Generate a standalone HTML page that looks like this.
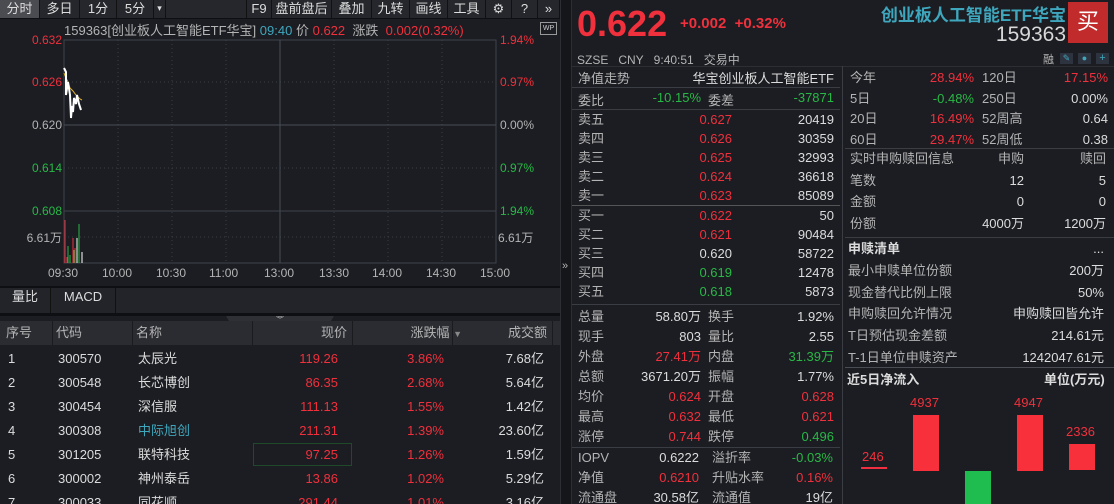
<!DOCTYPE html><html><head><meta charset="utf-8"><style>
*{margin:0;padding:0;box-sizing:border-box}
html{width:1114px;height:504px;overflow:hidden}
body{width:1114px;height:504px;background:#1b1d22;font-family:"Liberation Sans","Noto Sans CJK SC",sans-serif;color:#d0d0d0;font-size:13px;position:relative;overflow:hidden}
.a{position:absolute;white-space:nowrap}
.r{color:#f0303c}.g{color:#28b846}.w{color:#dcdcdc}.l{color:#b4b4b4}.t{color:#3fa7bd}
.ra{text-align:right}
.hl{position:absolute;height:1px;background:#3a3d44}
.vl{position:absolute;width:1px;background:#3a3d44}
.tb span{position:absolute;top:0;height:18px;line-height:17px;font-size:13px;color:#ddd;text-align:center;border-right:1px solid #111}
</style></head><body>
<div class="a tb" style="left:0;top:0;width:560px;height:18px;background:#25272c">
<span style="left:0;width:40px;background:#4a4c52">分时</span><span style="left:40px;width:40px">多日</span><span style="left:80px;width:37px">1分</span><span style="left:117px;width:37px">5分</span><span style="left:154px;width:12px;font-size:9px">▾</span>
<span style="left:246px;width:26px;border-left:1px solid #111">F9</span><span style="left:272px;width:60px">盘前盘后</span><span style="left:332px;width:40px">叠加</span><span style="left:372px;width:38px">九转</span><span style="left:410px;width:38px">画线</span><span style="left:448px;width:38px">工具</span><span style="left:486px;width:26px">⚙</span><span style="left:512px;width:26px">?</span><span style="left:538px;width:22px">»</span>
</div>
<div class="hl" style="left:0;top:18px;width:560px;background:#0e0f12"></div>
<div class="a" style="left:64px;top:20px;font-size:13px"><span class="l">159363[创业板人工智能ETF华宝]</span> <span class="t">09:40</span> <span class="l">价</span> <span class="r">0.622</span> <span class="l">&nbsp;涨跌</span> <span class="r">&nbsp;0.002(0.32%)</span></div>
<div class="a" style="left:540px;top:22px;width:17px;height:13px;border:1px solid #999;font-size:7px;color:#ccc;text-align:center;line-height:11px">WP</div>
<svg class="a" style="left:0;top:0" width="560" height="290">
<g stroke="#3a3d44" stroke-dasharray="1,3" stroke-width="1">
<line x1="64" y1="82" x2="496" y2="82"/><line x1="64" y1="168" x2="496" y2="168"/><line x1="64" y1="211" x2="496" y2="211"/><line x1="64" y1="237" x2="496" y2="237"/>
<line x1="118" y1="40" x2="118" y2="263"/><line x1="172" y1="40" x2="172" y2="263"/><line x1="226" y1="40" x2="226" y2="263"/><line x1="334" y1="40" x2="334" y2="263"/><line x1="388" y1="40" x2="388" y2="263"/><line x1="442" y1="40" x2="442" y2="263"/>
</g>
<rect x="64" y="40" width="432" height="223" fill="none" stroke="#3f4249"/>
<line x1="64" y1="125" x2="496" y2="125" stroke="#4a4d54"/><line x1="280" y1="40" x2="280" y2="263" stroke="#4a4d54"/>
<line x1="64" y1="211" x2="496" y2="211" stroke="#3f4249"/>
<polyline points="64,73 66,78 68,82 70,88 73,91 76,95 80,99 82,100" fill="none" stroke="#e3b12a" stroke-width="1"/>
<polyline points="64,68 66,72 66,95 68,82 70,95 71,118 72,106 73,112 74,98 76,104 77,95 79,104 81,110" fill="none" stroke="#fff" stroke-width="2"/>
<g stroke-width="1"><line x1="65" y1="220" x2="65" y2="263" stroke="#f03040"/><line x1="67" y1="257" x2="67" y2="263" stroke="#f03040"/><line x1="68" y1="246" x2="68" y2="263" stroke="#28b846"/><line x1="70" y1="255" x2="70" y2="263" stroke="#28b846"/><line x1="73" y1="238" x2="73" y2="263" stroke="#f03040"/><line x1="74" y1="250" x2="74" y2="263" stroke="#28b846"/><line x1="75" y1="248" x2="75" y2="263" stroke="#f03040"/><line x1="77" y1="238" x2="77" y2="263" stroke="#fff"/><line x1="79" y1="224" x2="79" y2="263" stroke="#28b846"/><line x1="82" y1="252" x2="82" y2="263" stroke="#fff"/></g>
</svg>
<div class="a r ra" style="left:20px;top:33px;width:42px;font-size:12px">0.632</div>
<div class="a r ra" style="left:20px;top:75px;width:42px;font-size:12px">0.626</div>
<div class="a l ra" style="left:20px;top:118px;width:42px;font-size:12px">0.620</div>
<div class="a g ra" style="left:20px;top:161px;width:42px;font-size:12px">0.614</div>
<div class="a g ra" style="left:20px;top:204px;width:42px;font-size:12px">0.608</div>
<div class="a l ra" style="left:10px;top:229px;width:52px;font-size:12px">6.61万</div>
<div class="a r" style="left:500px;top:33px;font-size:12px">1.94%</div>
<div class="a r" style="left:500px;top:75px;font-size:12px">0.97%</div>
<div class="a l" style="left:500px;top:118px;font-size:12px">0.00%</div>
<div class="a g" style="left:500px;top:161px;font-size:12px">0.97%</div>
<div class="a g" style="left:500px;top:204px;font-size:12px">1.94%</div>
<div class="a l" style="left:498px;top:229px;font-size:12px">6.61万</div>
<div class="a l" style="left:0;top:266px;width:560px;font-size:12px">
<span class="a" style="left:48px">09:30</span><span class="a" style="left:102px">10:00</span><span class="a" style="left:156px">10:30</span><span class="a" style="left:209px">11:00</span><span class="a" style="left:264px">13:00</span><span class="a" style="left:319px">13:30</span><span class="a" style="left:372px">14:00</span><span class="a" style="left:426px">14:30</span><span class="a" style="left:480px">15:00</span></div>
<div class="hl" style="left:0;top:286px;width:560px;background:#0e0f12;height:2px"></div>
<div class="a" style="left:0;top:288px;width:560px;height:26px;background:#22242a"></div>
<div class="a w" style="left:0;top:288px;width:51px;height:25px;line-height:18px;text-align:center;border-right:1px solid #111">量比</div>
<div class="a w" style="left:51px;top:288px;width:65px;height:25px;line-height:18px;text-align:center;border-right:1px solid #111">MACD</div>
<div class="hl" style="left:0;top:313px;width:560px;background:#0e0f12;height:3px"></div>
<div class="a" style="left:226px;top:316px;width:108px;height:9px;background:#2e3036;clip-path:polygon(0 0,100% 0,95% 100%,5% 100%);font-size:8px;text-align:center;line-height:8px;color:#ccc">︾</div>
<div class="a" style="left:0;top:321px;width:560px;height:24px;background:#2a2c31"></div>
<div class="a l" style="left:0;top:321px;width:560px;height:24px;line-height:24px">
<span class="a" style="left:6px">序号</span><span class="a" style="left:56px">代码</span><span class="a" style="left:136px">名称</span><span class="a ra" style="left:252px;width:95px">现价</span><span class="a ra" style="left:352px;width:110px">涨跌幅 <span style="font-size:9px;color:#888">▼</span></span><span class="a ra" style="left:452px;width:95px">成交额</span></div>
<div class="vl" style="left:52px;top:321px;height:24px;background:#1a1b1f"></div><div class="vl" style="left:132px;top:321px;height:24px;background:#1a1b1f"></div><div class="vl" style="left:252px;top:321px;height:24px;background:#1a1b1f"></div><div class="vl" style="left:352px;top:321px;height:24px;background:#1a1b1f"></div><div class="vl" style="left:452px;top:321px;height:24px;background:#1a1b1f"></div><div class="vl" style="left:552px;top:321px;height:24px;background:#1a1b1f"></div>
<div class="a" style="left:253px;top:443px;width:99px;height:23px;border:1px solid #1f4a2a"></div>
<div class="a w" style="left:0;top:347px;width:560px;font-size:13px;line-height:24px">
<div style="position:relative;height:24px"><span class="a" style="left:8px">1</span><span class="a" style="left:58px">300570</span><span class="a" style="left:138px">太辰光</span><span class="a r ra" style="left:252px;width:86px">119.26</span><span class="a r ra" style="left:352px;width:92px">3.86%</span><span class="a ra" style="left:452px;width:92px">7.68亿</span></div>
<div style="position:relative;height:24px"><span class="a" style="left:8px">2</span><span class="a" style="left:58px">300548</span><span class="a" style="left:138px">长芯博创</span><span class="a r ra" style="left:252px;width:86px">86.35</span><span class="a r ra" style="left:352px;width:92px">2.68%</span><span class="a ra" style="left:452px;width:92px">5.64亿</span></div>
<div style="position:relative;height:24px"><span class="a" style="left:8px">3</span><span class="a" style="left:58px">300454</span><span class="a" style="left:138px">深信服</span><span class="a r ra" style="left:252px;width:86px">111.13</span><span class="a r ra" style="left:352px;width:92px">1.55%</span><span class="a ra" style="left:452px;width:92px">1.42亿</span></div>
<div style="position:relative;height:24px"><span class="a" style="left:8px">4</span><span class="a" style="left:58px">300308</span><span class="a t" style="left:138px">中际旭创</span><span class="a r ra" style="left:252px;width:86px">211.31</span><span class="a r ra" style="left:352px;width:92px">1.39%</span><span class="a ra" style="left:452px;width:92px">23.60亿</span></div>
<div style="position:relative;height:24px"><span class="a" style="left:8px">5</span><span class="a" style="left:58px">301205</span><span class="a" style="left:138px">联特科技</span><span class="a r ra" style="left:252px;width:86px">97.25</span><span class="a r ra" style="left:352px;width:92px">1.26%</span><span class="a ra" style="left:452px;width:92px">1.59亿</span></div>
<div style="position:relative;height:24px"><span class="a" style="left:8px">6</span><span class="a" style="left:58px">300002</span><span class="a" style="left:138px">神州泰岳</span><span class="a r ra" style="left:252px;width:86px">13.86</span><span class="a r ra" style="left:352px;width:92px">1.02%</span><span class="a ra" style="left:452px;width:92px">5.29亿</span></div>
<div style="position:relative;height:24px"><span class="a" style="left:8px">7</span><span class="a" style="left:58px">300033</span><span class="a" style="left:138px">同花顺</span><span class="a r ra" style="left:252px;width:86px">291.44</span><span class="a r ra" style="left:352px;width:92px">1.01%</span><span class="a ra" style="left:452px;width:92px">3.16亿</span></div>
</div>
<div class="a" style="left:560px;top:0;width:12px;height:504px;background:#15161a;border-left:1px solid #2c2e33;border-right:1px solid #2c2e33"></div>
<div class="a l" style="left:562px;top:260px;font-size:11px">»</div>
<div class="a r" style="left:577px;top:3px;font-size:36px;font-weight:bold">0.622</div>
<div class="a r" style="left:680px;top:15px;font-size:15px;font-weight:bold">+0.002&nbsp;&nbsp;+0.32%</div>
<div class="a t ra" style="left:820px;top:1px;width:246px;font-size:17px;font-weight:bold">创业板人工智能ETF华宝</div>
<div class="a ra" style="left:900px;top:23px;width:166px;font-size:21px;color:#d8d8d8">159363</div>
<div class="a" style="left:1068px;top:2px;width:40px;height:41px;background:#c22b2b;color:#fff;font-size:22px;text-align:center;line-height:40px">买</div>
<div class="a l" style="left:577px;top:51px;font-size:12px">SZSE&nbsp;&nbsp;&nbsp;CNY&nbsp;&nbsp;&nbsp;9:40:51&nbsp;&nbsp;&nbsp;交易中</div>
<div class="a l" style="left:1043px;top:51px;font-size:11px">融</div>
<div class="a" style="left:1060px;top:53px;width:13px;height:11px;background:#2e3340;color:#3fa7bd;font-size:9px;text-align:center">✎</div>
<div class="a" style="left:1078px;top:53px;width:13px;height:11px;background:#2e3340;color:#3fa7bd;font-size:9px;text-align:center">●</div>
<div class="a" style="left:1096px;top:53px;width:13px;height:11px;background:#2e3340;color:#3fa7bd;font-size:11px;line-height:11px;text-align:center">+</div>
<div class="hl" style="left:572px;top:66px;width:542px;background:#2c2e33"></div>
<div class="vl" style="left:842px;top:66px;height:438px;background:#3a3d44"></div>
<div class="a l" style="left:578px;top:68px">净值走势</div><div class="a w ra" style="left:680px;top:68px;width:154px">华宝创业板人工智能ETF</div>
<div class="hl" style="left:572px;top:87px;width:268px"></div>
<div class="a l" style="left:578px;top:90px">委比</div><div class="a g ra" style="left:620px;top:90px;width:81px">-10.15%</div><div class="a l" style="left:708px;top:90px">委差</div><div class="a g ra" style="left:760px;top:90px;width:74px">-37871</div>
<div class="hl" style="left:572px;top:109px;width:268px"></div>
<div class="a" style="left:578px;top:110px;width:256px;line-height:19px">
<div style="position:relative;height:19px"><span class="l">卖五</span><span class="a r ra" style="left:80px;width:74px">0.627</span><span class="a w ra" style="left:180px;width:76px">20419</span></div>
<div style="position:relative;height:19px"><span class="l">卖四</span><span class="a r ra" style="left:80px;width:74px">0.626</span><span class="a w ra" style="left:180px;width:76px">30359</span></div>
<div style="position:relative;height:19px"><span class="l">卖三</span><span class="a r ra" style="left:80px;width:74px">0.625</span><span class="a w ra" style="left:180px;width:76px">32993</span></div>
<div style="position:relative;height:19px"><span class="l">卖二</span><span class="a r ra" style="left:80px;width:74px">0.624</span><span class="a w ra" style="left:180px;width:76px">36618</span></div>
<div style="position:relative;height:19px"><span class="l">卖一</span><span class="a r ra" style="left:80px;width:74px">0.623</span><span class="a w ra" style="left:180px;width:76px">85089</span></div>
</div>
<div class="hl" style="left:572px;top:205px;width:268px;background:#555"></div>
<div class="a" style="left:578px;top:206px;width:256px;line-height:19px">
<div style="position:relative;height:19px"><span class="l">买一</span><span class="a r ra" style="left:80px;width:74px">0.622</span><span class="a w ra" style="left:180px;width:76px">50</span></div>
<div style="position:relative;height:19px"><span class="l">买二</span><span class="a r ra" style="left:80px;width:74px">0.621</span><span class="a w ra" style="left:180px;width:76px">90484</span></div>
<div style="position:relative;height:19px"><span class="l">买三</span><span class="a w ra" style="left:80px;width:74px">0.620</span><span class="a w ra" style="left:180px;width:76px">58722</span></div>
<div style="position:relative;height:19px"><span class="l">买四</span><span class="a g ra" style="left:80px;width:74px">0.619</span><span class="a w ra" style="left:180px;width:76px">12478</span></div>
<div style="position:relative;height:19px"><span class="l">买五</span><span class="a g ra" style="left:80px;width:74px">0.618</span><span class="a w ra" style="left:180px;width:76px">5873</span></div>
</div>
<div class="hl" style="left:572px;top:304px;width:268px"></div>
<div class="a" style="left:578px;top:307px;width:256px;line-height:20px">
<div style="position:relative;height:20px"><span class="l">总量</span><span class="a w ra" style="left:0;width:123px">58.80万</span><span class="a l" style="left:130px">换手</span><span class="a w ra" style="left:180px;width:76px">1.92%</span></div>
<div style="position:relative;height:20px"><span class="l">现手</span><span class="a w ra" style="left:0;width:123px">803</span><span class="a l" style="left:130px">量比</span><span class="a w ra" style="left:180px;width:76px">2.55</span></div>
<div style="position:relative;height:20px"><span class="l">外盘</span><span class="a r ra" style="left:0;width:123px">27.41万</span><span class="a l" style="left:130px">内盘</span><span class="a g ra" style="left:180px;width:76px">31.39万</span></div>
<div style="position:relative;height:20px"><span class="l">总额</span><span class="a w ra" style="left:0;width:123px">3671.20万</span><span class="a l" style="left:130px">振幅</span><span class="a w ra" style="left:180px;width:76px">1.77%</span></div>
<div style="position:relative;height:20px"><span class="l">均价</span><span class="a r ra" style="left:0;width:123px">0.624</span><span class="a l" style="left:130px">开盘</span><span class="a r ra" style="left:180px;width:76px">0.628</span></div>
<div style="position:relative;height:20px"><span class="l">最高</span><span class="a r ra" style="left:0;width:123px">0.632</span><span class="a l" style="left:130px">最低</span><span class="a r ra" style="left:180px;width:76px">0.621</span></div>
<div style="position:relative;height:20px"><span class="l">涨停</span><span class="a r ra" style="left:0;width:123px">0.744</span><span class="a l" style="left:130px">跌停</span><span class="a g ra" style="left:180px;width:76px">0.496</span></div>
</div>
<div class="hl" style="left:572px;top:447px;width:268px"></div>
<div class="a" style="left:578px;top:448px;width:256px;line-height:20px">
<div style="position:relative;height:20px"><span class="l">IOPV</span><span class="a w ra" style="left:0;width:121px">0.6222</span><span class="a l" style="left:134px">溢折率</span><span class="a g ra" style="left:180px;width:75px">-0.03%</span></div>
<div style="position:relative;height:20px"><span class="l">净值</span><span class="a r ra" style="left:0;width:121px">0.6210</span><span class="a l" style="left:134px">升贴水率</span><span class="a r ra" style="left:180px;width:75px">0.16%</span></div>
<div style="position:relative;height:20px"><span class="l">流通盘</span><span class="a w ra" style="left:0;width:121px">30.58亿</span><span class="a l" style="left:134px">流通值</span><span class="a w ra" style="left:180px;width:75px">19亿</span></div>
</div>
<div class="a" style="left:850px;top:68px;width:258px;line-height:20.5px">
<div style="position:relative;height:20.5px"><span class="l">今年</span><span class="a r ra" style="left:0;width:124px">28.94%</span><span class="a l" style="left:132px">120日</span><span class="a r ra" style="left:150px;width:108px">17.15%</span></div>
<div style="position:relative;height:20.5px"><span class="l">5日</span><span class="a g ra" style="left:0;width:124px">-0.48%</span><span class="a l" style="left:132px">250日</span><span class="a w ra" style="left:150px;width:108px">0.00%</span></div>
<div style="position:relative;height:20.5px"><span class="l">20日</span><span class="a r ra" style="left:0;width:124px">16.49%</span><span class="a l" style="left:132px">52周高</span><span class="a w ra" style="left:150px;width:108px">0.64</span></div>
<div style="position:relative;height:20.5px"><span class="l">60日</span><span class="a r ra" style="left:0;width:124px">29.47%</span><span class="a l" style="left:132px">52周低</span><span class="a w ra" style="left:150px;width:108px">0.38</span></div>
</div>
<div class="hl" style="left:845px;top:148px;width:269px"></div>
<div class="a" style="left:850px;top:148px;width:258px;line-height:21.5px">
<div style="position:relative;height:21.5px"><span class="l">实时申购赎回信息</span><span class="a l ra" style="left:0;width:174px">申购</span><span class="a l ra" style="left:150px;width:106px">赎回</span></div>
<div style="position:relative;height:21.5px"><span class="l">笔数</span><span class="a w ra" style="left:0;width:174px">12</span><span class="a w ra" style="left:150px;width:106px">5</span></div>
<div style="position:relative;height:21.5px"><span class="l">金额</span><span class="a w ra" style="left:0;width:174px">0</span><span class="a w ra" style="left:150px;width:106px">0</span></div>
<div style="position:relative;height:21.5px"><span class="l">份额</span><span class="a w ra" style="left:0;width:174px">4000万</span><span class="a w ra" style="left:150px;width:106px">1200万</span></div>
</div>
<div class="hl" style="left:845px;top:237px;width:269px"></div>
<div class="a" style="left:848px;top:238px;width:260px;line-height:21.8px">
<div style="position:relative;height:21.8px"><span class="w" style="font-weight:bold">申赎清单</span><span class="a w ra" style="left:150px;width:106px">...</span></div>
<div style="position:relative;height:21.8px"><span class="l">最小申赎单位份额</span><span class="a w ra" style="left:150px;width:106px">200万</span></div>
<div style="position:relative;height:21.8px"><span class="l">现金替代比例上限</span><span class="a w ra" style="left:150px;width:106px">50%</span></div>
<div style="position:relative;height:21.8px"><span class="l">申购赎回允许情况</span><span class="a w ra" style="left:150px;width:106px">申购赎回皆允许</span></div>
<div style="position:relative;height:21.8px"><span class="l">T日预估现金差额</span><span class="a w ra" style="left:150px;width:106px">214.61元</span></div>
<div style="position:relative;height:21.8px"><span class="l">T-1日单位申赎资产</span><span class="a w ra" style="left:100px;width:156px">1242047.61元</span></div>
</div>
<div class="hl" style="left:845px;top:367px;width:269px;background:#4a4d54"></div>
<div class="a w" style="left:847px;top:369px;font-weight:bold">近5日净流入</div>
<div class="a w" style="left:1044px;top:369px;font-weight:bold">单位(万元)</div>
<div class="a" style="left:861px;top:467px;width:26px;height:2px;background:#f03040"></div>
<div class="a r" style="left:862px;top:449px;font-size:13px">246</div>
<div class="a" style="left:913px;top:415px;width:26px;height:56px;background:#f8303c"></div>
<div class="a r" style="left:910px;top:395px;font-size:13px">4937</div>
<div class="a" style="left:965px;top:471px;width:26px;height:33px;background:#1fbc50"></div>
<div class="a" style="left:1017px;top:415px;width:26px;height:56px;background:#f8303c"></div>
<div class="a r" style="left:1014px;top:395px;font-size:13px">4947</div>
<div class="a" style="left:1069px;top:444px;width:26px;height:26px;background:#f8303c"></div>
<div class="a r" style="left:1066px;top:424px;font-size:13px">2336</div>
</body></html>
